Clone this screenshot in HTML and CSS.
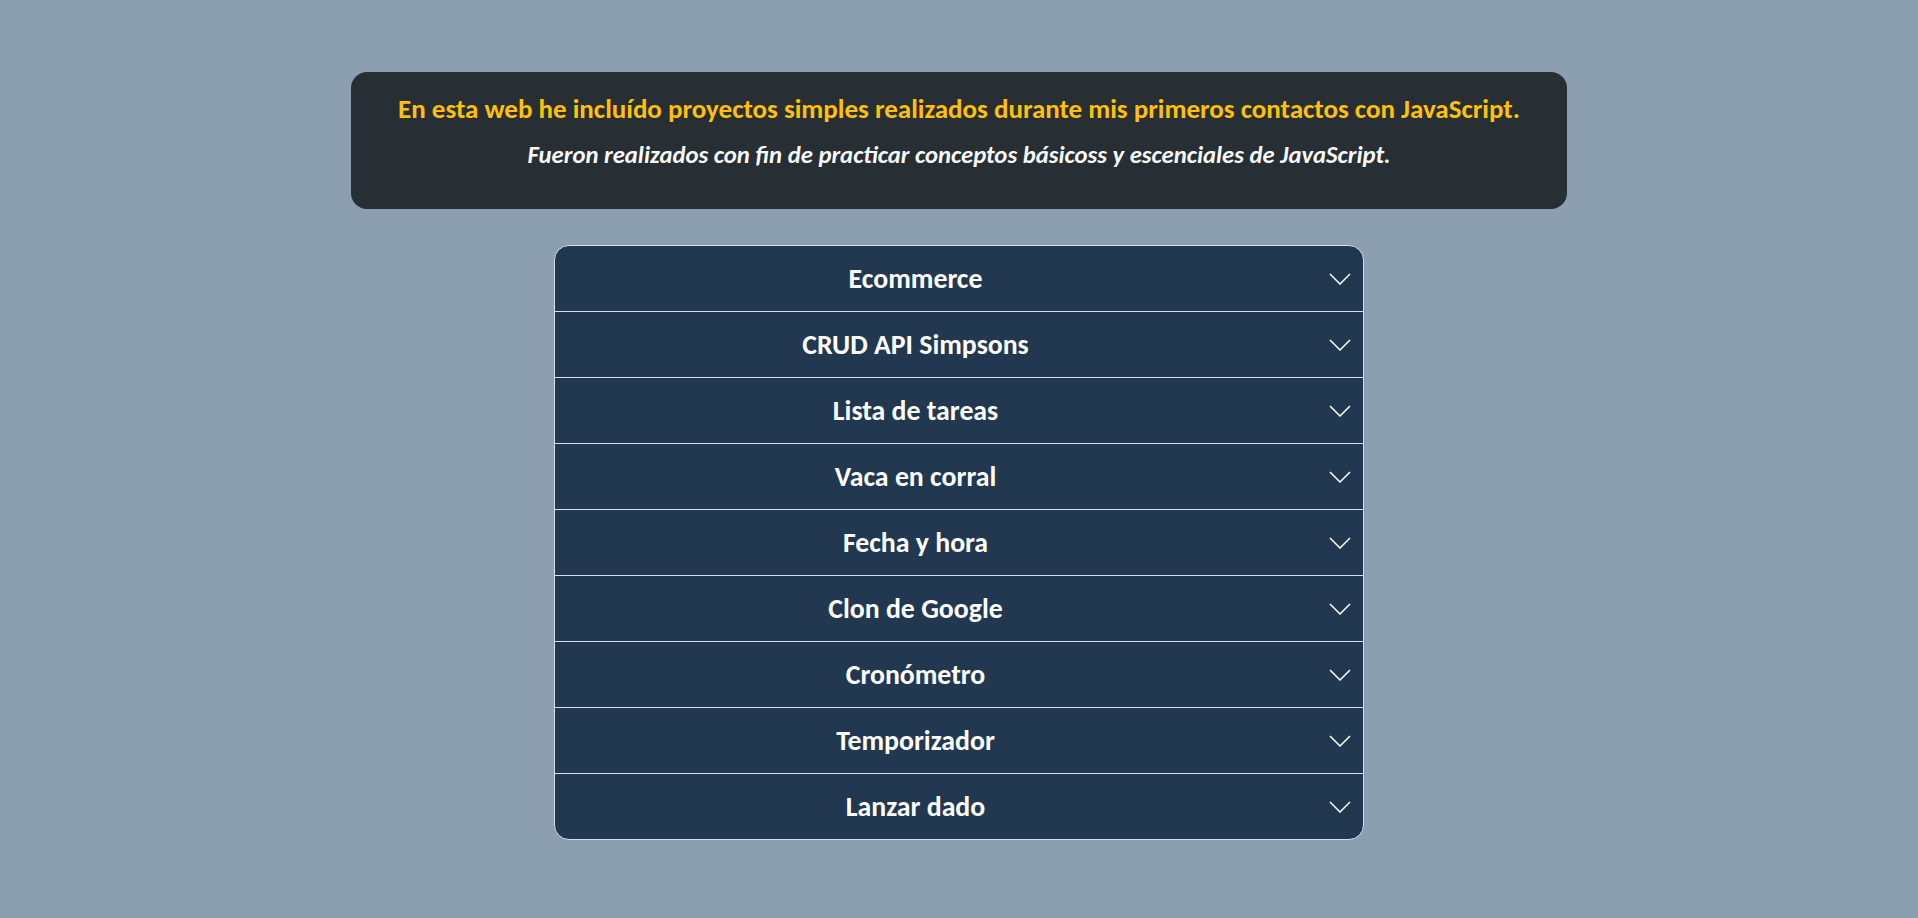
FILE: index.html
```html
<!DOCTYPE html>
<html lang="es">
<head>
<meta charset="utf-8">
<title>Proyectos JavaScript</title>
<link rel="stylesheet" href="styles.css">
</head>
<body>
<main class="page">
  <header class="intro">
    <p class="intro-lead">En esta web he incluído proyectos simples realizados durante mis primeros contactos con JavaScript.</p>
    <p class="intro-sub">Fueron realizados con fin de practicar conceptos básicoss y escenciales de JavaScript.</p>
  </header>

  <section class="accordion">
    <div class="acc-item"><button class="acc-btn"><span class="acc-title">Ecommerce</span><svg class="chev" width="22" height="12" viewBox="0 0 22 12"><polyline points="1,1 11,11 21,1"/></svg></button></div>
    <div class="acc-item"><button class="acc-btn"><span class="acc-title">CRUD API Simpsons</span><svg class="chev" width="22" height="12" viewBox="0 0 22 12"><polyline points="1,1 11,11 21,1"/></svg></button></div>
    <div class="acc-item"><button class="acc-btn"><span class="acc-title">Lista de tareas</span><svg class="chev" width="22" height="12" viewBox="0 0 22 12"><polyline points="1,1 11,11 21,1"/></svg></button></div>
    <div class="acc-item"><button class="acc-btn"><span class="acc-title">Vaca en corral</span><svg class="chev" width="22" height="12" viewBox="0 0 22 12"><polyline points="1,1 11,11 21,1"/></svg></button></div>
    <div class="acc-item"><button class="acc-btn"><span class="acc-title">Fecha y hora</span><svg class="chev" width="22" height="12" viewBox="0 0 22 12"><polyline points="1,1 11,11 21,1"/></svg></button></div>
    <div class="acc-item"><button class="acc-btn"><span class="acc-title">Clon de Google</span><svg class="chev" width="22" height="12" viewBox="0 0 22 12"><polyline points="1,1 11,11 21,1"/></svg></button></div>
    <div class="acc-item"><button class="acc-btn"><span class="acc-title">Cronómetro</span><svg class="chev" width="22" height="12" viewBox="0 0 22 12"><polyline points="1,1 11,11 21,1"/></svg></button></div>
    <div class="acc-item"><button class="acc-btn"><span class="acc-title">Temporizador</span><svg class="chev" width="22" height="12" viewBox="0 0 22 12"><polyline points="1,1 11,11 21,1"/></svg></button></div>
    <div class="acc-item"><button class="acc-btn"><span class="acc-title">Lanzar dado</span><svg class="chev" width="22" height="12" viewBox="0 0 22 12"><polyline points="1,1 11,11 21,1"/></svg></button></div>
  </section>
</main>
</body>
</html>
```

FILE: styles.css
```css
* { box-sizing: border-box; }

html, body {
  margin: 0;
  padding: 0;
}

body {
  background: #8c9fb0;
  font-family: "Carlito", "Lato", "Noto Sans", sans-serif;
  color: #fff;
  min-height: 918px;
}

.page {
  display: flex;
  flex-direction: column;
  align-items: center;
  padding-top: 72px;
}

.intro {
  width: 1216px;
  background: #272e34;
  border-radius: 16px;
  padding: 22px 20px 39px;
  display: flex;
  flex-direction: column;
  align-items: center;
  gap: 16px;
}

.intro p {
  margin: 0;
  line-height: 30px;
  text-align: center;
}

.intro-lead {
  color: #ffc107;
  font-weight: 700;
  font-size: 27px;
}

.intro-sub {
  color: #f8f9fa;
  font-weight: 700;
  font-style: italic;
  font-size: 24.7px;
}

.accordion {
  width: 810px;
  margin-top: 36px;
  background: #213850;
  border: 1px solid #d6dde4;
  border-radius: 15px;
  overflow: hidden;
}

.acc-item + .acc-item {
  border-top: 1px solid #d6dde4;
}

.acc-btn {
  width: 100%;
  height: 65px;
  display: flex;
  align-items: center;
  padding: 0 12px 0 20px;
  background: transparent;
  border: 0;
  color: #fff;
  font-family: inherit;
  cursor: pointer;
}

.acc-title {
  flex: 1;
  text-align: center;
  font-size: 27.8px;
  font-weight: 700;
  line-height: 32px;
}

.chev {
  margin-left: 73px;
  flex: none;
  fill: none;
  stroke: #fff;
  stroke-width: 1.5;
}
```
